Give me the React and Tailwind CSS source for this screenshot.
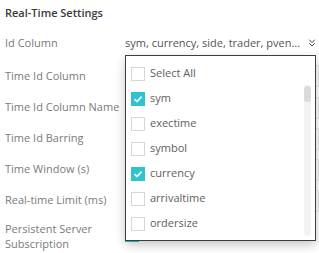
import React from "react";
import { ChevronsDown } from "lucide-react";

const labels = [
  { text: "Time Id Column", h: "h-[32px]" },
  { text: "Time Id Column Name", h: "h-[31px]" },
  { text: "Time Id Barring", h: "h-[31px]" },
  { text: "Time Window (s)", h: "h-[31px]" },
  { text: "Real-time Limit (ms)", h: "h-[31px]" },
];

const options = [
  { name: "Select All", checked: false },
  { name: "sym", checked: true },
  { name: "exectime", checked: false },
  { name: "symbol", checked: false },
  { name: "currency", checked: true },
  { name: "arrivaltime", checked: false },
  { name: "ordersize", checked: false },
];

const Checkbox = ({ checked }) =>
  checked ? (
    <span className="flex h-[14px] w-[14px] items-center justify-center bg-[#2ec4cd]">
      <svg width="10" height="8" viewBox="0 0 10 8" fill="none">
        <path d="M1.5 4.2 L4 6.5 L8.6 1.6" stroke="#fff" strokeWidth="1.7" />
      </svg>
    </span>
  ) : (
    <span className="h-[14px] w-[14px] border border-[#d6d6d6] bg-white" />
  );

export default function App() {
  return (
    <div className="relative h-[253px] w-[319px] overflow-hidden bg-white pl-[5px] font-['Open_Sans',sans-serif] text-[11px] text-[#7a7a7a]">
      <div className="flex h-[26px] items-center text-[11px] font-semibold text-[#3a3a3a]">
        Real-Time Settings
      </div>

      <div className="flex h-[34px] items-center">
        <div className="w-[120px]">Id Column</div>
        <div className="flex flex-1 items-center text-[#555]">
          <span className="truncate">sym, currency, side, trader, pven...</span>
          <ChevronsDown className="ml-auto mr-[1px] h-[12px] w-[12px] text-[#444]" strokeWidth={2} />
        </div>
      </div>

      {labels.map((l) => (
        <div key={l.text} className={`flex items-center ${l.h}`}>
          <div className="w-[120px]">{l.text}</div>
          <div className="h-[22px] flex-1 border border-[#ececec]" />
        </div>
      ))}

      <div className="flex pt-[5px] leading-[15px]">
        <div className="w-[120px]">
          Persistent Server
          <br />
          Subscription
        </div>
        <div className="mt-[7px] h-[14px] w-[14px] bg-[#2ec4cd]" />
      </div>

      <div className="absolute left-[125px] top-[55px] h-[186px] w-[191px] border border-[#3d3d3d] bg-white shadow-[0_4px_10px_rgba(0,0,0,0.22)]">
        <div className="pt-[5px]">
          {options.map((o) => (
            <div key={o.name} className="flex h-[25px] items-center gap-[5px] pl-[5px] text-[#5e5e5e]">
              <Checkbox checked={o.checked} />
              <span>{o.name}</span>
            </div>
          ))}
        </div>
        <div className="absolute right-[4px] top-[29px] h-[151px] w-[7px] rounded-full bg-[#f3f3f3]">
          <div className="mt-[1px] h-[16px] w-[7px] rounded-full bg-[#dadada]" />
        </div>
      </div>
    </div>
  );
}
